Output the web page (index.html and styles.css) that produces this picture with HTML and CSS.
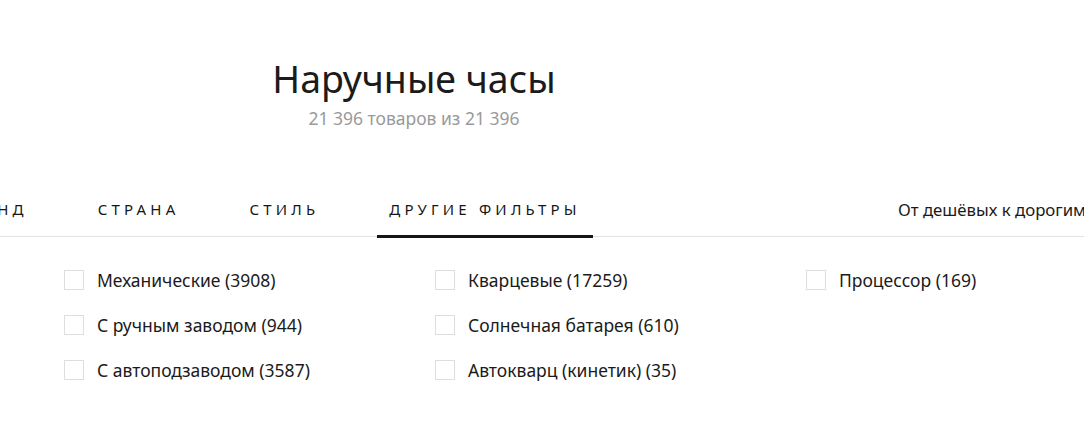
FILE: index.html
```html
<!DOCTYPE html>
<html lang="ru">
<head>
<meta charset="utf-8">
<title>Наручные часы</title>
<link rel="stylesheet" href="styles.css">
</head>
<body>
<div class="page">
  <header class="head">
    <h1 class="title">Наручные часы</h1>
    <div class="count">21 396 товаров из 21 396</div>
  </header>
  <nav class="bar">
    <ul class="tabs">
      <li class="tab">БРЕНД</li>
      <li class="tab">СТРАНА</li>
      <li class="tab">СТИЛЬ</li>
      <li class="tab active">ДРУГИЕ ФИЛЬТРЫ</li>
    </ul>
    <div class="sort">От дешёвых к дорогим</div>
  </nav>
  <div class="filters">
    <label class="opt"><span class="box"></span><span class="lbl">Механические (3908)</span></label>
    <label class="opt"><span class="box"></span><span class="lbl">Кварцевые (17259)</span></label>
    <label class="opt"><span class="box"></span><span class="lbl">Процессор (169)</span></label>
    <label class="opt"><span class="box"></span><span class="lbl">С ручным заводом (944)</span></label>
    <label class="opt"><span class="box"></span><span class="lbl">Солнечная батарея (610)</span></label>
    <span class="opt empty"></span>
    <label class="opt"><span class="box"></span><span class="lbl">С автоподзаводом (3587)</span></label>
    <label class="opt"><span class="box"></span><span class="lbl">Автокварц (кинетик) (35)</span></label>
  </div>
</div>
</body>
</html>
```
FILE: styles.css
```css
html, body {
  margin: 0;
  padding: 0;
  background: #fff;
  overflow: hidden;
}
body {
  font-family: "Noto Sans", "Open Sans", sans-serif;
  color: #1b1b1b;
}
.page {
  width: 1084px;
  height: 445px;
  overflow: hidden;
}
.head {
  width: 828px;
  text-align: center;
  padding-top: 56px;
}
.title {
  margin: 0;
  font-weight: 400;
  font-size: 37.5px;
  line-height: 46px;
  color: #1b1b1b;
}
.count {
  margin-top: 5px;
  font-size: 17.5px;
  line-height: 22px;
  color: #9a9a9a;
}
.bar {
  margin-top: 60px;
  display: flex;
  justify-content: space-between;
  align-items: stretch;
  border-bottom: 1px solid #e2e2e2;
  height: 47px;
}
.tabs {
  list-style: none;
  margin: 0 0 0 -54px;
  padding: 0;
  display: flex;
  gap: 46px;
}
.tab {
  position: relative;
  padding: 10px 12px 0;
  font-size: 15px;
  letter-spacing: 4.2px;
  line-height: 20px;
  color: #161616;
}
.tab.active::after {
  content: "";
  position: absolute;
  left: 0;
  right: 0;
  bottom: -2px;
  height: 3px;
  background: #151515;
}
.sort {
  padding-top: 11px;
  font-size: 16.8px;
  line-height: 20px;
  white-space: nowrap;
  margin-right: -2px;
}
.filters {
  display: grid;
  grid-template-columns: repeat(3, 371px);
  grid-auto-rows: 45px;
  padding: 33px 0 0 64px;
}
.opt {
  display: flex;
  align-items: center;
  gap: 13px;
  height: 20px;
  font-size: 17.5px;
  color: #1b1b1b;
  cursor: pointer;
}
.box {
  box-sizing: border-box;
  width: 20px;
  height: 20px;
  border: 1px solid #dedede;
  flex: none;
}
.lbl {
  line-height: 20px;
}
```
